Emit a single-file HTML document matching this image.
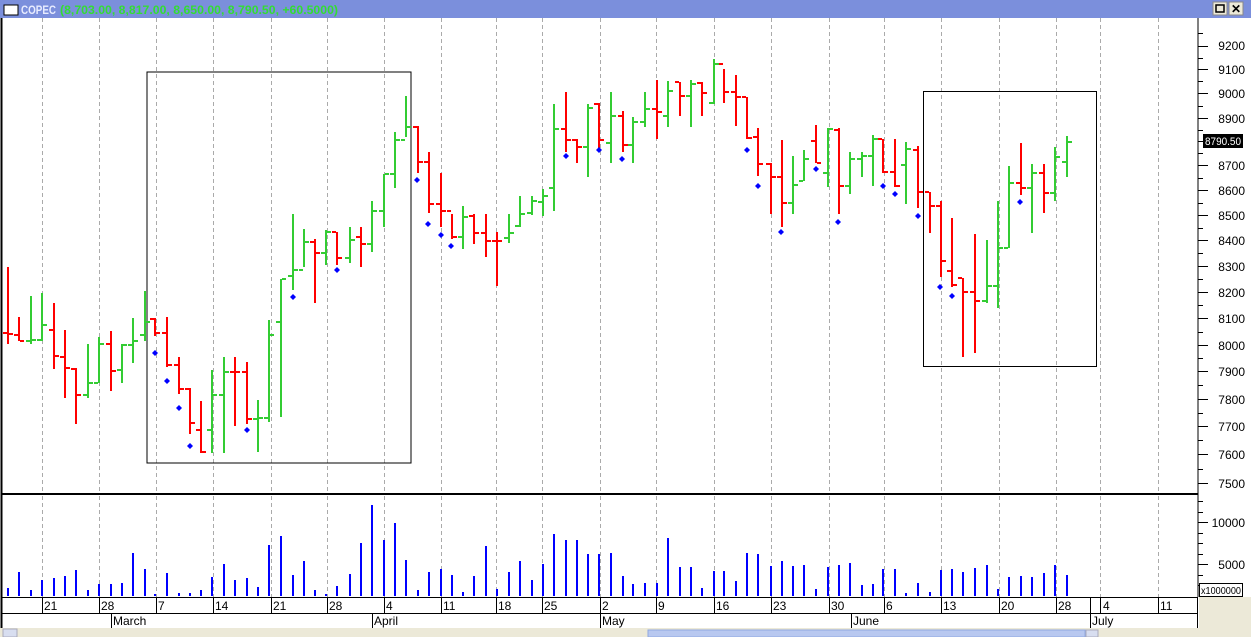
<!DOCTYPE html>
<html><head><meta charset="utf-8"><style>
body{margin:0;width:1251px;height:637px;overflow:hidden;background:#fff;font-family:"Liberation Sans",sans-serif;}
svg{display:block}
</style></head><body>
<svg id="s" width="1251" height="637" viewBox="0 0 1251 637" xmlns="http://www.w3.org/2000/svg" font-family="Liberation Sans, sans-serif">
<rect width="1251" height="637" fill="#fff"/>
<!-- title bar -->
<rect x="0" y="0" width="1251" height="18" fill="#7b8fdc"/>
<rect x="4" y="5" width="14" height="10" fill="#fff" stroke="#000" stroke-width="1"/>
<text x="21" y="14" font-size="12" fill="#e8ecff" font-weight="bold" textLength="35" lengthAdjust="spacingAndGlyphs">COPEC</text>
<text x="60" y="14" font-size="12" fill="#33dd33" font-weight="bold" textLength="278" lengthAdjust="spacingAndGlyphs">(8,703.00, 8,817.00, 8,650.00, 8,790.50, +60.5000)</text>
<rect x="1213" y="2" width="14" height="13" fill="#ece9d8" stroke="#888"/>
<rect x="1216" y="5" width="8" height="7" fill="none" stroke="#000" stroke-width="1.5"/>
<rect x="1229" y="2" width="14" height="13" fill="#ece9d8" stroke="#888"/>
<text x="1231" y="13" font-size="12" font-weight="bold" fill="#000">✕</text>
<!-- borders -->
<line x1="1.5" y1="18" x2="1.5" y2="628" stroke="#000" stroke-width="2"/>
<line x1="1198" y1="18" x2="1198" y2="597" stroke="#000" stroke-width="1"/>
<line x1="2" y1="494" x2="1198" y2="494" stroke="#000" stroke-width="2"/>
<g id="grid" stroke="#aaa" stroke-dasharray="4,3" stroke-width="1"></g>
<rect x="147" y="72" width="264" height="391" fill="none" stroke="#000"/>
<rect x="923.5" y="91.5" width="173" height="275" fill="none" stroke="#000"/>
<g id="bars"></g>
<g id="vol" stroke="#0000ff" stroke-width="2"></g>
<!-- right axis -->
<g font-size="12" fill="#000" text-anchor="end">
<text x="1245" y="50">9200</text><text x="1245" y="74">9100</text><text x="1245" y="98">9000</text>
<text x="1245" y="123">8900</text><text x="1245" y="170">8700</text><text x="1245" y="195">8600</text>
<text x="1245" y="220">8500</text><text x="1245" y="245">8400</text><text x="1245" y="271">8300</text>
<text x="1245" y="297">8200</text><text x="1245" y="323">8100</text><text x="1245" y="350">8000</text>
<text x="1245" y="376">7900</text><text x="1245" y="404">7800</text><text x="1245" y="431">7700</text>
<text x="1245" y="459">7600</text><text x="1245" y="488">7500</text>
<text x="1245" y="527">10000</text><text x="1245" y="569">5000</text>
</g>
<g id="ticks" stroke="#000" stroke-width="1"></g>
<rect x="1203" y="134" width="40" height="14" fill="#000"/>
<text x="1205" y="145" font-size="11" fill="#fff" textLength="36" lengthAdjust="spacingAndGlyphs">8790.50</text>
<rect x="1199.5" y="583.5" width="43" height="13" fill="#fff" stroke="#000"/>
<text x="1201" y="594" font-size="10" fill="#000" textLength="40" lengthAdjust="spacingAndGlyphs">x1000000</text>
<!-- date axis -->
<rect x="1199" y="597" width="52" height="40" fill="#ece9d8"/>
<line x1="2" y1="597.5" x2="1198" y2="597.5" stroke="#000"/>
<line x1="2" y1="613.5" x2="1198" y2="613.5" stroke="#000"/>
<line x1="1197.5" y1="597" x2="1197.5" y2="628" stroke="#000"/>
<g stroke="#000" id="dticks"></g>
<g font-size="12" fill="#000">
<text x="44" y="610">21</text><text x="101" y="610">28</text><text x="158" y="610">7</text><text x="215" y="610">14</text>
<text x="273" y="610">21</text><text x="329" y="610">28</text><text x="386" y="610">4</text><text x="443" y="610">11</text>
<text x="498" y="610">18</text><text x="544" y="610">25</text><text x="602" y="610">2</text><text x="658" y="610">9</text>
<text x="716" y="610">16</text><text x="773" y="610">23</text><text x="831" y="610">30</text><text x="886" y="610">6</text>
<text x="943" y="610">13</text><text x="1001" y="610">20</text><text x="1058" y="610">28</text><text x="1103" y="610">4</text>
<text x="1160" y="610">11</text>
<text x="113" y="625">March</text><text x="374" y="625">April</text><text x="602" y="625">May</text>
<text x="853" y="625">June</text><text x="1092" y="625">July</text>
</g>
<rect x="0" y="628" width="1251" height="9" fill="#ece9d8"/>
<rect x="3" y="629" width="14" height="8" fill="#d8def0" stroke="#aab"/>
<rect x="648" y="630" width="437" height="7" fill="#b8c8f0" stroke="#90a8e0"/>
<rect x="1086" y="630" width="12" height="7" fill="#d8def0" stroke="#aab"/>
</svg>
<script>
var NS="http://www.w3.org/2000/svg";
function el(p,t,a){var e=document.createElementNS(NS,t);for(var k in a)e.setAttribute(k,a[k]);p.appendChild(e);return e;}
var grid=document.getElementById('grid');
[42,99,156,213,271,327,384,441,496,542,600,656,714,771,829,884,941,999,1056,1100,1158].forEach(function(x){
 el(grid,'line',{x1:x+.5,y1:18,x2:x+.5,y2:493});el(grid,'line',{x1:x+.5,y1:496,x2:x+.5,y2:597});});
var dt=document.getElementById('dticks');
[42,99,156,213,271,327,384,441,496,542,600,656,714,771,829,884,941,999,1056,1100,1158].forEach(function(x){el(dt,'line',{x1:x+.5,y1:597,x2:x+.5,y2:613});});
[111,372,600,851,1090].forEach(function(x){el(dt,'line',{x1:x+.5,y1:613,x2:x+.5,y2:628});});
el(dt,'line',{x1:1090.5,y1:597,x2:1090.5,y2:613});
var tk=document.getElementById('ticks');
var ly=[46,69,93,118,141,165,190,215,240,266,292,318,345,371,399,426,454,483];
for(var i=0;i<ly.length;i++){el(tk,'line',{x1:1198,y1:ly[i]+.5,x2:1208,y2:ly[i]+.5});
 if(i<ly.length-1){var m=(ly[i]+ly[i+1])/2;el(tk,'line',{x1:1198,y1:Math.round(m)+.5,x2:1203,y2:Math.round(m)+.5});}}
el(tk,'line',{x1:1198,y1:33.5,x2:1203,y2:33.5});
[501,512,522,533,543,554,564,575,585].forEach(function(y,i){el(tk,'line',{x1:1198,y1:y+.5,x2:(y==522||y==564)?1208:1203,y2:y+.5});});
var R='#ff0000',G='#33cc33';
var B=[[8,267,344,333,334,R],[19,317,341,335,341,R],[31,296,344,341,340,G],[42,293,341,340,325,G],[54,303,369,330,356,R],[65,330,398,357,368,R],[76,368,424,369,395,R],[88,344,398,395,383,G],[99,337,383,383,344,G],[111,331,391,344,371,R],[122,344,383,370,345,G],[133,318,363,345,341,G],[145,291,341,335,322,G],[155,318,336,319,333,R],[167,317,367,333,365,R],[179,357,394,365,389,R],[190,388,434,389,423,R],[201,401,453,430,452,R],[212,370,453,430,395,G],[224,357,453,395,372,G],[235,357,426,372,372,R],[247,362,424,372,419,R],[258,400,452,419,418,G],[269,320,422,418,335,G],[281,279,417,322,279,G],[293,214,290,276,270,G],[304,229,267,270,242,G],[315,239,303,242,253,R],[326,230,265,253,232,G],[337,232,265,232,258,R],[350,227,263,258,240,G],[361,227,267,237,244,R],[372,201,252,244,211,G],[384,174,227,211,174,G],[395,132,188,174,140,G],[406,96,137,140,127,G],[418,126,173,127,162,R],[429,152,213,162,204,R],[441,173,227,204,211,R],[452,214,239,211,237,R],[463,206,249,237,217,G],[474,214,244,216,233,R],[486,214,257,233,241,R],[497,232,286,241,241,R],[509,214,243,238,233,G],[520,196,227,226,214,G],[532,196,215,213,201,G],[543,189,216,202,196,G],[554,104,211,188,129,G],[566,92,152,129,140,R],[577,139,163,140,147,R],[588,104,177,147,108,G],[599,103,150,104,140,R],[611,92,163,143,116,G],[623,111,152,116,145,R],[633,117,163,145,122,G],[645,92,127,122,109,G],[657,80,139,109,112,R],[668,81,127,116,91,G],[680,82,116,82,96,R],[691,80,127,96,84,G],[702,82,116,83,93,R],[714,59,104,103,64,G],[724,69,103,64,92,R],[736,75,126,92,97,R],[747,97,139,97,138,R],[758,128,176,137,164,R],[771,163,214,164,177,R],[782,140,227,177,203,R],[793,156,214,203,185,G],[804,150,181,181,159,G],[816,125,163,141,163,R],[828,128,187,173,129,G],[839,128,214,130,186,R],[850,152,194,186,159,G],[862,152,177,159,156,G],[873,135,186,156,139,G],[883,139,173,139,172,R],[895,139,187,172,186,R],[906,142,204,165,149,G],[918,146,208,150,192,R],[930,192,233,192,206,R],[941,201,277,206,261,R],[952,218,287,271,285,R],[963,278,357,278,292,R],[975,234,353,292,301,R],[987,240,303,301,286,G],[998,201,308,286,248,G],[1009,166,248,248,183,G],[1021,143,195,183,188,R],[1032,164,233,188,173,G],[1044,164,213,173,193,R],[1055,147,201,193,157,G],[1067,136,177,162,142,G]];
var bg=document.getElementById('bars');
B.forEach(function(b){
 el(bg,'rect',{x:b[0]-1,y:b[1],width:2,height:b[2]-b[1],fill:b[5]});
 el(bg,'rect',{x:b[0]-5,y:b[3]-1,width:4,height:2,fill:b[5]});
 el(bg,'rect',{x:b[0]+1,y:b[4]-1,width:4,height:2,fill:b[5]});
});
var D=[[155,353],[167,381],[179,408],[190,446],[247,430],[293,297],[337,270],[417,180],[428,224],[441,235],[451,246],[566,156],[599,150],[622,159],[747,150],[758,186],[781,232],[816,169],[838,222],[883,186],[895,194],[918,216],[940,287],[952,296],[1020,202]];
D.forEach(function(d){el(bg,'path',{d:'M'+d[0]+' '+(d[1]-3)+'L'+(d[0]+3)+' '+d[1]+'L'+d[0]+' '+(d[1]+3)+'L'+(d[0]-3)+' '+d[1]+'Z',fill:'#0000ff'});});
var V={8:588,19:572,31:590,42:580,54:578,65:576,76:570,88:590,99:584,111:584,122:583,133:553,145:569,155:594,167:573,179:593,190:593,201:590,212:577,224:564,235:580,247:578,258:587,269:545,281:536,293:575,304:561,315:590,326:594,337:586,350:574,361:543,372:505,384:540,395:523,406:560,418:590,429:572,441:569,452:575,463:592,474:576,486:546,497:589,509:572,520:561,532:580,543:564,554:534,566:540,577:540,588:554,599:554,611:553,623:576,633:584,645:583,657:583,668:538,680:567,691:567,702:588,714:571,724:571,736:581,747:553,758:554,771:566,782:561,793:566,804:565,816:589,828:567,839:565,850:563,862:585,873:584,883:569,895:569,906:593,918:583,930:592,941:570,952:569,963:572,975:568,987:565,998:589,1009:577,1021:576,1032:577,1044:573,1055:565,1067:575};
var vg=document.getElementById('vol');
for(var x in V){el(vg,'line',{x1:+x,y1:V[x],x2:+x,y2:596});}
</script>
</body></html>
